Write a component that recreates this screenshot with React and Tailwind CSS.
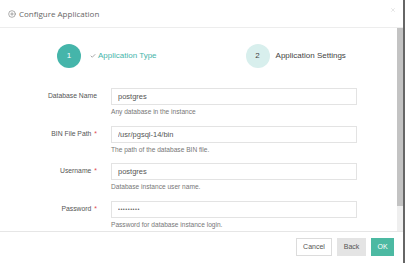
import { CirclePlus, Check, X } from "lucide-react";

const fields = [
  { label: "Database Name", required: false, value: "postgres", help: "Any database in the instance" },
  { label: "BIN File Path", required: true, value: "/usr/pgsql-14/bin", help: "The path of the database BIN file." },
  { label: "Username", required: true, value: "postgres", help: "Database instance user name." },
  { label: "Password", required: true, value: "postgres1", help: "Password for database instance login.", password: true },
];

function Field({ field }) {
  return (
    <div className="flex items-start">
      <div className="w-[97px] shrink-0 pt-[3px] text-right text-[6.8px] leading-[10px] text-[#555]">
        {field.label}
        {field.required && <span className="ml-[3px] text-[#e04b4b]">*</span>}
      </div>
      <div className="ml-[14px] w-[246px]">
        <input
          readOnly
          type={field.password ? "password" : "text"}
          value={field.value}
          className={
            field.password
              ? "block h-[17px] w-full border border-[#e3e3e3] bg-white px-[6px] text-[5.5px] tracking-[0.5px] text-[#666] outline-none"
              : "block h-[17px] w-full border border-[#e3e3e3] bg-white px-[6px] text-[7.5px] text-[#555] outline-none"
          }
        />
        <p className="mt-[2px] text-[6.6px] leading-[10px] text-[#777]">{field.help}</p>
      </div>
    </div>
  );
}

export default function App() {
  return (
    <div className="flex h-[263px] w-[405px] bg-[#666]" style={{ fontFamily: '"Liberation Sans", Arial, sans-serif' }}>
      <div className="flex h-full w-[403px] flex-col bg-white">
        {/* Header */}
        <div className="flex h-[28px] shrink-0 items-center justify-between border-b border-[#ededed] pl-[8px] pr-[7px]">
          <div
            className="flex items-center gap-[3px] text-[8px] text-[#666]"
            style={{ fontFamily: '"Open Sans", sans-serif' }}
          >
            <CirclePlus size={8} strokeWidth={1.6} />
            <span>Configure Application</span>
          </div>
          <X size={6} strokeWidth={1.5} className="-mt-[8px] text-[#bbb]" />
        </div>

        {/* Body */}
        <div className="flex h-[203px] shrink-0">
          <div className="flex-1 overflow-hidden">
            {/* Steps */}
            <div className="flex items-center pt-[16px]">
              <div className="ml-[57px] flex h-[24px] w-[24px] items-center justify-center rounded-full bg-[#45b5aa] text-[8px] text-white">
                1
              </div>
              <Check size={6} strokeWidth={2.5} className="ml-[9px] text-[#777]" />
              <span className="ml-[2px] text-[8px] text-[#45b5aa]">Application Type</span>
              <div className="ml-[89px] flex h-[24px] w-[24px] items-center justify-center rounded-full bg-[#d8efed] text-[8px] text-[#444]">
                2
              </div>
              <span className="ml-[6px] text-[8px] font-normal text-[#444]">Application Settings</span>
            </div>

            {/* Form */}
            <div className="mt-[20px] flex flex-col gap-[8.5px]">
              {fields.map((f) => (
                <Field key={f.label} field={f} />
              ))}
            </div>
          </div>
          {/* scrollbar */}
          <div className="flex w-[6px] flex-col bg-[#efefef]">
            <div className="h-[178px] bg-[#c3c3c3]"></div>
          </div>
        </div>

        {/* Footer */}
        <div className="flex flex-1 items-start justify-end gap-[5px] border-t border-[#e6e6e6] pr-[9px] pt-[6px]">
          <button className="h-[18px] w-[36px] border border-[#dcdcdc] bg-white text-[7px] text-[#555]">Cancel</button>
          <button className="h-[18px] w-[29px] bg-[#e4e4e4] text-[7px] text-[#555]">Back</button>
          <button className="h-[18px] w-[23px] bg-[#4cb9a2] text-[7px] text-white">OK</button>
        </div>
      </div>
    </div>
  );
}
